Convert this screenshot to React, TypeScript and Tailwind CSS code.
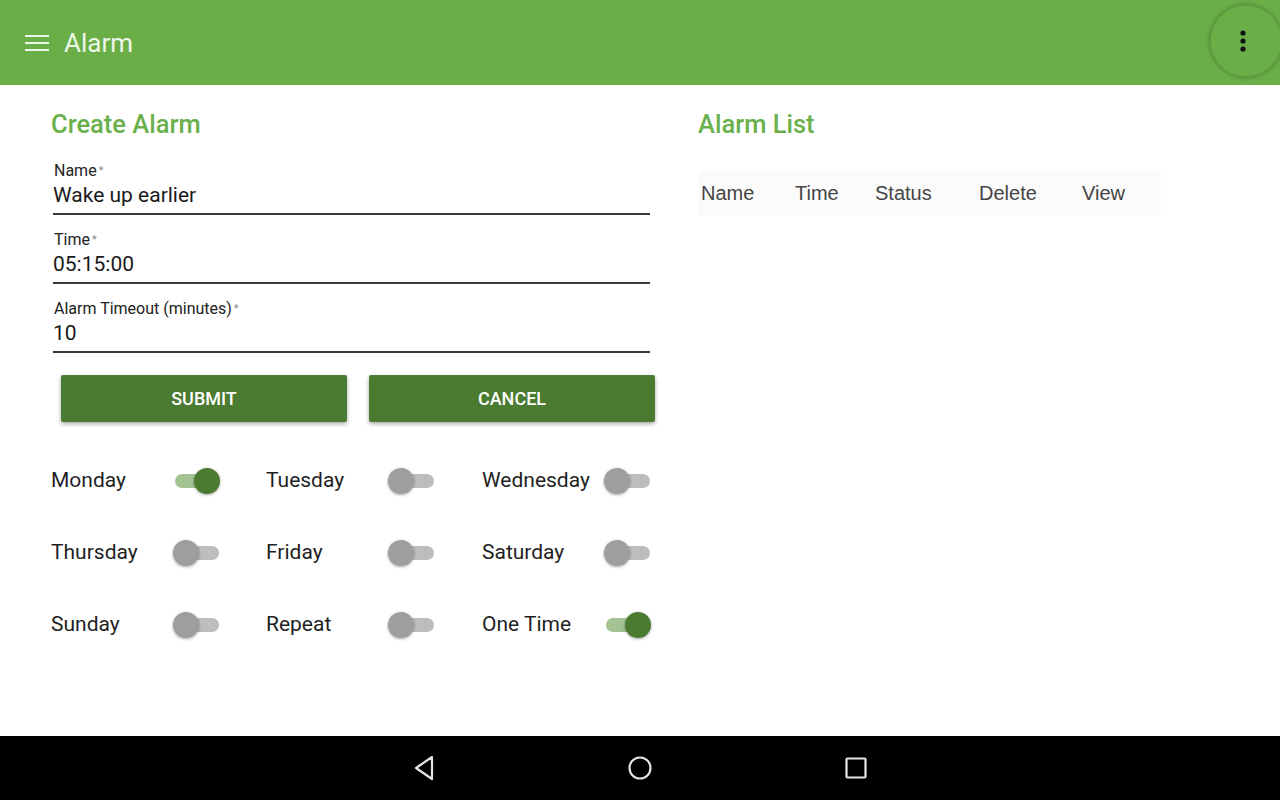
import React, { useState } from 'react';

type Day = { label: string; on: boolean };

const initialDays: Day[] = [
  { label: 'Monday', on: true },
  { label: 'Tuesday', on: false },
  { label: 'Wednesday', on: false },
  { label: 'Thursday', on: false },
  { label: 'Friday', on: false },
  { label: 'Saturday', on: false },
  { label: 'Sunday', on: false },
  { label: 'Repeat', on: false },
  { label: 'One Time', on: true },
];

const Toggle: React.FC<{ on: boolean; onClick: () => void }> = ({ on, onClick }) => (
  <button type="button" onClick={onClick} className="relative w-[48px] h-[28px] shrink-0">
    <span
      className={`absolute left-[2px] right-[2px] top-[7px] h-[14px] rounded-full ${
        on ? 'bg-[#a3c392]' : 'bg-[#bdbdbd]'
      }`}
    />
    <span
      className={`absolute top-[1px] w-[26px] h-[26px] rounded-full shadow-[0_1px_3px_rgba(0,0,0,0.35)] ${
        on ? 'left-[21px] bg-[#4b7a31]' : 'left-0 bg-[#9e9e9e]'
      }`}
    />
  </button>
);

const Field: React.FC<{ label: string; value: string }> = ({ label, value }) => (
  <div className="pl-[2px]">
    <div className="text-[16px] leading-[18px] text-[#222] pl-[1px]">
      {label}
      <span className="text-[11px] text-[#888] align-top ml-[2px]">*</span>
    </div>
    <div className="text-[21px] leading-[26px] text-[#1a1a1a] mt-[2px]">{value}</div>
    <div className="h-[2px] bg-[#3a3a3a] mt-[5px]" />
  </div>
);

const App: React.FC = () => {
  const [days, setDays] = useState<Day[]>(initialDays);

  const flip = (i: number) =>
    setDays(days.map((d, idx) => (idx === i ? { ...d, on: !d.on } : d)));

  return (
    <div className="w-[1280px] h-[800px] flex flex-col bg-white font-['Roboto',sans-serif]">
      {/* app bar */}
      <header className="h-[85px] shrink-0 bg-[#6aae48] flex items-center pl-[25px]">
        <svg width="24" height="18" viewBox="0 0 24 18" className="shrink-0">
          <rect x="0" y="1" width="24" height="2" fill="#eef6ea" />
          <rect x="0" y="8" width="24" height="2" fill="#eef6ea" />
          <rect x="0" y="15" width="24" height="2" fill="#eef6ea" />
        </svg>
        <h1 className="ml-[15px] text-[26px] text-[#eef6ea] leading-none">Alarm</h1>
        <div className="ml-auto -mr-[2px] w-[72px] h-[72px] rounded-full bg-[#6aae48] shadow-[0_0_3px_2px_rgba(0,0,0,0.15),inset_0_0_2px_rgba(0,0,0,0.15)] flex items-center justify-center mb-[4px]">
          <svg width="6" height="22" viewBox="0 0 6 22" className="-ml-[7px]">
            <circle cx="3" cy="3" r="2.6" fill="#111" />
            <circle cx="3" cy="11" r="2.6" fill="#111" />
            <circle cx="3" cy="19" r="2.6" fill="#111" />
          </svg>
        </div>
      </header>

      <main className="flex-1 flex">
        {/* create alarm */}
        <section className="w-[655px] pl-[51px] pt-[24px]">
          <h2 className="text-[25.5px] font-medium text-[#6ab04c] leading-[30px]">Create Alarm</h2>
          <div className="w-[599px] flex flex-col gap-[16px] mt-[23px]">
            <Field label="Name" value="Wake up earlier" />
            <Field label="Time" value="05:15:00" />
            <Field label="Alarm Timeout (minutes)" value="10" />
          </div>
          <div className="flex gap-[22px] ml-[10px] mt-[22px]">
            <button className="w-[286px] h-[47px] bg-[#4b7a31] text-white text-[18px] font-medium rounded-[2px] shadow-[0_2px_4px_rgba(0,0,0,0.35)]">
              SUBMIT
            </button>
            <button className="w-[286px] h-[47px] bg-[#4b7a31] text-white text-[18px] font-medium rounded-[2px] shadow-[0_2px_4px_rgba(0,0,0,0.35)]">
              CANCEL
            </button>
          </div>
          <div className="grid grid-cols-[215px_216px_173px] gap-y-[44px] mt-[45px] w-[604px]">
            {days.map((d, i) => (
              <div key={d.label} className="flex items-center h-[28px]">
                <span className="w-[122px] text-[21px] text-[#1f1f1f]">{d.label}</span>
                <Toggle on={d.on} onClick={() => flip(i)} />
              </div>
            ))}
          </div>
        </section>

        {/* alarm list */}
        <section className="flex-1 pl-[43px] pt-[24px]">
          <h2 className="text-[25.5px] font-medium text-[#6ab04c] leading-[30px]">Alarm List</h2>
          <div className="w-[463px] h-[46px] mt-[31px] bg-[#fbfbfb] flex items-center text-[20px] text-[#454545] font-['Liberation_Sans',sans-serif]">
            <span className="w-[97px] pl-[3px]">Name</span>
            <span className="w-[80px]">Time</span>
            <span className="w-[104px]">Status</span>
            <span className="w-[103px]">Delete</span>
            <span>View</span>
          </div>
        </section>
      </main>

      {/* android nav bar */}
      <nav className="h-[64px] shrink-0 bg-black flex items-center justify-center gap-[180px]">
        <svg width="36" height="36" viewBox="0 0 36 36">
          <path d="M26 7 L10 18 L26 29 Z" fill="none" stroke="#e6e6e6" strokeWidth="2.2" strokeLinejoin="round" />
        </svg>
        <svg width="36" height="36" viewBox="0 0 36 36">
          <circle cx="18" cy="18" r="10.5" fill="none" stroke="#e6e6e6" strokeWidth="2.2" />
        </svg>
        <svg width="36" height="36" viewBox="0 0 36 36">
          <rect x="8.5" y="8.5" width="19" height="19" rx="1" fill="none" stroke="#e6e6e6" strokeWidth="2.2" />
        </svg>
      </nav>
    </div>
  );
};

export default App;
